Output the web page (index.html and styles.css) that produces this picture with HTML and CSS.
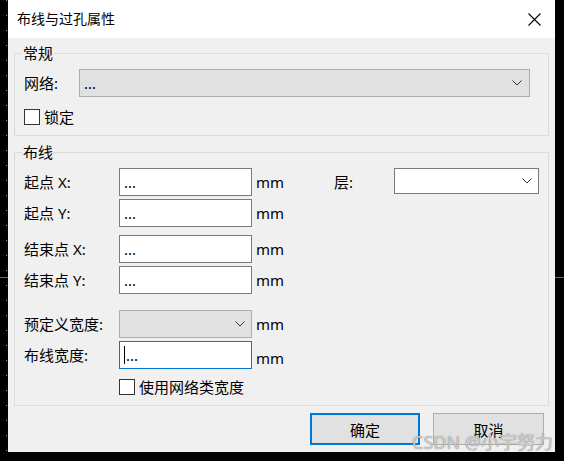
FILE: index.html
```html
<!DOCTYPE html>
<html lang="zh-CN">
<head>
<meta charset="utf-8">
<title>布线与过孔属性</title>
<link rel="stylesheet" href="styles.css">
</head>
<body>
<div class="dialog">
  <div class="titlebar">
    <span class="title">布线与过孔属性</span>
    <svg class="close" width="13" height="13" viewBox="0 0 13 13"><path d="M0.5 0.5 L12.5 12.5 M12.5 0.5 L0.5 12.5" stroke="#000" stroke-width="1.1" fill="none"/></svg>
  </div>
  <div class="content">
    <fieldset class="group general">
      <legend>常规</legend>
      <div class="row">
        <span class="lbl net">网络:</span>
        <div class="combo disabled net-combo"><span>...</span><svg class="chev" width="10" height="6" viewBox="0 0 10 6"><path d="M0.5 0.5 L5 5 L9.5 0.5" stroke="#333" fill="none"/></svg></div>
      </div>
      <div class="check first">
        <span class="box"></span><span>锁定</span>
      </div>
    </fieldset>
    <fieldset class="group routing">
      <legend>布线</legend>
      <div class="row">
        <span class="lbl">起点 X:</span>
        <div class="field">...</div>
        <span class="unit wide">mm</span>
        <span class="lbl layer">层:</span>
        <div class="combo layer-combo"><span></span><svg class="chev" width="10" height="6" viewBox="0 0 10 6"><path d="M0.5 0.5 L5 5 L9.5 0.5" stroke="#333" fill="none"/></svg></div>
      </div>
      <div class="row tight">
        <span class="lbl">起点 Y:</span>
        <div class="field">...</div>
        <span class="unit">mm</span>
      </div>
      <div class="row mid">
        <span class="lbl">结束点 X:</span>
        <div class="field">...</div>
        <span class="unit">mm</span>
      </div>
      <div class="row tight">
        <span class="lbl">结束点 Y:</span>
        <div class="field">...</div>
        <span class="unit">mm</span>
      </div>
      <div class="row wide-gap">
        <span class="lbl">预定义宽度:</span>
        <div class="combo disabled small-combo"><span></span><svg class="chev" width="10" height="6" viewBox="0 0 10 6"><path d="M0.5 0.5 L5 5 L9.5 0.5" stroke="#333" fill="none"/></svg></div>
        <span class="unit">mm</span>
      </div>
      <div class="row tight">
        <span class="lbl">布线宽度:</span>
        <div class="field focused"><span class="caret"></span>...</div>
        <span class="unit low">mm</span>
      </div>
      <div class="check second">
        <span class="box"></span><span>使用网络类宽度</span>
      </div>
    </fieldset>
    <div class="buttons">
      <button class="btn primary">确定</button>
      <button class="btn cancel">取消</button>
    </div>
  </div>
  <div class="watermark">CSDN @小宇努力</div>
</div>
</body>
</html>
```
FILE: styles.css
```css
* { box-sizing: border-box; }
html, body { margin: 0; padding: 0; }
body {
  width: 564px;
  height: 461px;
  overflow: hidden;
  background-color: #000;
  background-image:
    linear-gradient(#6a6a6a, #6a6a6a),
    linear-gradient(to bottom, #9a9a9a 0 1px, transparent 1px);
  background-size: 100% 1px, 1px 15px;
  background-position: 0 277px, 6px 0;
  background-repeat: no-repeat, repeat-y;
}
.dialog {
  position: relative;
  margin-left: 8px;
  width: 547px;
  height: 452px;
  background: #f0f0f0;
  font-family: "Noto Sans", "Noto Sans CJK SC", sans-serif;
  font-size: 15px;
  color: #000;
}
.titlebar {
  height: 38px;
  background: #fff;
  display: flex;
  align-items: center;
  justify-content: space-between;
  padding: 0 14px 0 9px;
}
.title { font-size: 14px; line-height: 20px; }
.close { display: block; }
.content { padding: 0 6px; }
.group {
  margin: 8px 0 0;
  padding: 8px 9px 10px;
  border: 1px solid #dcdcdc;
  min-width: 0;
}
.group.general { margin-top: 7px; }
legend {
  padding: 0 1px;
  margin-left: -2px;
  line-height: 16px;
  font-size: 15px;
}
.row {
  display: flex;
  align-items: center;
  height: 28px;
}
.row.tight { margin-top: 3px; }
.row.mid { margin-top: 8px; }
.row.wide-gap { margin-top: 16px; }
.lbl { width: 95px; line-height: 20px; white-space: nowrap; flex: none; }
.lbl.net { width: 55px; }
.lbl.layer { width: 60px; }
.field {
  width: 133px;
  height: 28px;
  border: 1px solid #7a7a7a;
  background: #fff;
  padding-left: 4px;
  display: flex;
  align-items: center;
  line-height: 20px;
  flex: none;
}
.field.focused { border-color: #0078d7; }
.caret {
  display: inline-block;
  width: 1px;
  height: 18px;
  background: #000;
  margin-right: 1px;
}
.unit { margin-left: 4px; line-height: 20px; }
.unit.wide { width: 79px; }
.unit.low { margin-top: 6px; }
.combo {
  height: 28px;
  border: 1px solid #7a7a7a;
  background: #fff;
  display: flex;
  align-items: center;
  justify-content: space-between;
  padding: 0 7px 0 4px;
  line-height: 20px;
  flex: none;
}
.combo.disabled { background: #e1e1e1; border-color: #adadad; }
.net-combo { width: 451px; }
.layer-combo { width: 145px; height: 26px; align-self: flex-start; padding-right: 6px; }
.small-combo { width: 133px; padding-right: 6px; }
.chev { display: block; }
.check {
  display: flex;
  align-items: center;
  gap: 4px;
  height: 16px;
  line-height: 20px;
}
.check.first { margin-top: 12px; }
.check.second { margin-top: 10px; margin-left: 95px; }
.box {
  width: 16px;
  height: 16px;
  border: 1px solid #333;
  background: #fff;
  flex: none;
}
.buttons {
  display: flex;
  justify-content: flex-end;
  gap: 13px;
  margin: 7px 5px 0 0;
}
.btn {
  width: 110px;
  height: 32px;
  border: 1px solid #adadad;
  background: #e1e1e1;
  font: inherit;
  color: #000;
  padding: 0;
}
.btn.cancel { width: 111px; }
.btn.primary { border: 2px solid #0078d7; }
.watermark {
  position: absolute;
  right: 2px;
  bottom: -1px;
  font-size: 18px;
  line-height: 22px;
  color: rgba(215, 215, 215, 0.9);
  text-shadow: 0 0 1px #666;
  white-space: nowrap;
}
```
